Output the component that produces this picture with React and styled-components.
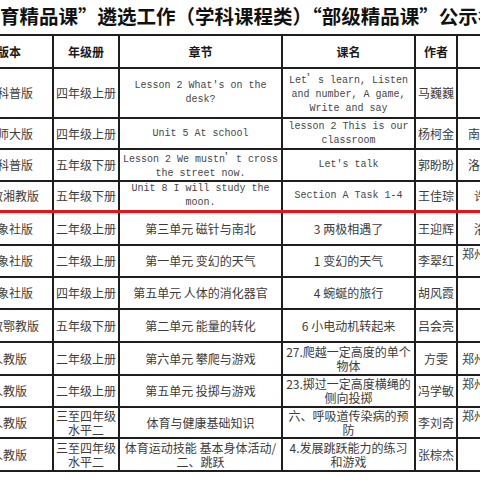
import React from "react";
import styled, { createGlobalStyle } from "styled-components";

const GlobalStyle = createGlobalStyle`
  html, body { margin: 0; padding: 0; background: #fff; }
  * { box-sizing: border-box; }
`;

const Page = styled.div`
  width: 480px;
  height: 480px;
  overflow: hidden;
  background: #fff;
  font-family: "Noto Sans CJK SC", "Noto Sans", sans-serif;
`;

const Title = styled.h1`
  margin: 0 0 0 -78px;
  height: 34px;
  line-height: 32px;
  white-space: nowrap;
  font-family: "Noto Sans CJK SC", sans-serif;
  font-weight: 700;
  font-size: 19.5px;
  color: #111;
`;

const Sheet = styled.div`
  margin-left: -34px;
  width: 584px;
`;

const Row = styled.div`
  display: grid;
  grid-template-columns: 88px 66px 163px 133px 42px 142px;
  height: ${(p) => p.$h}px;
  border-top: ${(p) => (p.$head ? "2px solid #1e1e1e" : "none")};
  border-bottom: ${(p) => (p.$red ? "3px solid #e3151a" : "2px solid #1e1e1e")};
`;

const Cell = styled.div`
  display: flex;
  align-items: center;
  justify-content: center;
  overflow: hidden;
  border-right: 2px solid #1e1e1e;
`;

const CellText = styled.span`
  display: block;
  text-align: center;
  white-space: nowrap;
  line-height: 14px;
  font-size: ${(p) => (p.$en ? "10px" : "12px")};
  color: ${(p) => (p.$head ? "#1a1a1a" : p.$en ? "#474747" : "#3c3c3c")};
  font-weight: ${(p) => (p.$head ? 700 : 400)};
  font-family: ${(p) =>
    p.$en
      ? '"Liberation Mono", "Noto Sans CJK SC", monospace'
      : '"Noto Sans CJK SC", sans-serif'};
`;

const Wide = styled.span`
  font-family: "Noto Sans CJK SC", sans-serif;
  font-size: 11px;
`;

const lines = (t) =>
  t.split("\n").map((l, i, a) => (
    <React.Fragment key={i}>
      {l}
      {i < a.length - 1 && <br />}
    </React.Fragment>
  ));

const rows = [
  {
    h: 50,
    c: ["新科普版", "四年级上册", "Lesson 2 What's on the\ndesk?", null, "马巍巍", ""],
    en: [false, false, true, true],
    course: (
      <>
        Let<Wide>’</Wide>s learn, Listen
        <br />
        and number, A game,
        <br />
        Write and say
      </>
    ),
  },
  {
    h: 31,
    c: ["北师大版", "四年级上册", "Unit 5 At school", "lesson 2 This is our\nclassroom", "杨柯金", "南阳市第二十一小学校"],
    en: [false, false, true, true],
  },
  {
    h: 32,
    c: ["新科普版", "五年级下册", null, "Let's talk", "郭盼盼", "洛阳市西工区实验小学"],
    en: [false, false, true, true],
    chapter: (
      <>
        Lesson 2 We mustn<Wide>’</Wide>t cross
        <br />
        the street now.
      </>
    ),
  },
  {
    h: 31,
    red: true,
    c: ["科教湘教版", "五年级下册", "Unit 8 I will study the\nmoon.", "Section A Task 1-4", "王佳琮", "许昌市毓秀路小学校"],
    en: [false, false, true, true],
  },
  { h: 33, c: ["大象社版", "二年级上册", "第三单元 磁针与南北", "3 两极相遇了", "王迎辉", "洛阳市东方第二小学"] },
  { h: 32, c: ["大象社版", "二年级上册", "第一单元 变幻的天气", "1 变幻的天气", "李翠红", "郑州市金水区纬五路第一\n小学"] },
  { h: 32, c: ["大象社版", "四年级上册", "第五单元 人体的消化器官", "4 蜿蜒的旅行", "胡风霞", ""] },
  { h: 33, c: ["科教鄂教版", "五年级下册", "第二单元 能量的转化", "6 小电动机转起来", "吕会亮", ""] },
  { h: 33, c: ["人教版", "二年级上册", "第六单元 攀爬与游戏", "27.爬越一定高度的单个\n物体", "方雯", "郑州市二七区长江路小学"] },
  { h: 32, c: ["人教版", "二年级上册", "第五单元 投掷与游戏", "23.掷过一定高度横绳的\n侧向投掷", "冯学敏", "郑州市管城回族区外国语\n小学"] },
  { h: 31, c: ["人教版", "三至四年级\n水平二", "体育与健康基础知识", "六、呼吸道传染病的预\n防", "李刘奇", "郑州高新技术产业开发区\n实验小学"] },
  { h: 33, c: ["人教版", "三至四年级\n水平二", "体育运动技能 基本身体活动/\n二、跳跃", "4.发展跳跃能力的练习\n和游戏", "张棕杰", ""] },
];

const headers = ["版本", "年级册", "章节", "课名", "作者", "工作单位"];

export default function App() {
  return (
    <Page>
      <GlobalStyle />
      <Title>“基础教育精品课”遴选工作（学科课程类）“部级精品课”公示名单</Title>
      <Sheet>
        <Row $head $h={35}>
          {headers.map((h) => (
            <Cell key={h}>
              <CellText $head>{h}</CellText>
            </Cell>
          ))}
        </Row>
        {rows.map((r, i) => (
          <Row key={i} $h={r.h} $red={r.red}>
            {r.c.map((t, j) => {
              const en = r.en ? r.en[j] : false;
              let content;
              if (j === 2 && r.chapter) content = r.chapter;
              else if (j === 3 && r.course) content = r.course;
              else content = lines(t || "");
              return (
                <Cell key={j}>
                  <CellText $en={en}>{content}</CellText>
                </Cell>
              );
            })}
          </Row>
        ))}
      </Sheet>
    </Page>
  );
}
